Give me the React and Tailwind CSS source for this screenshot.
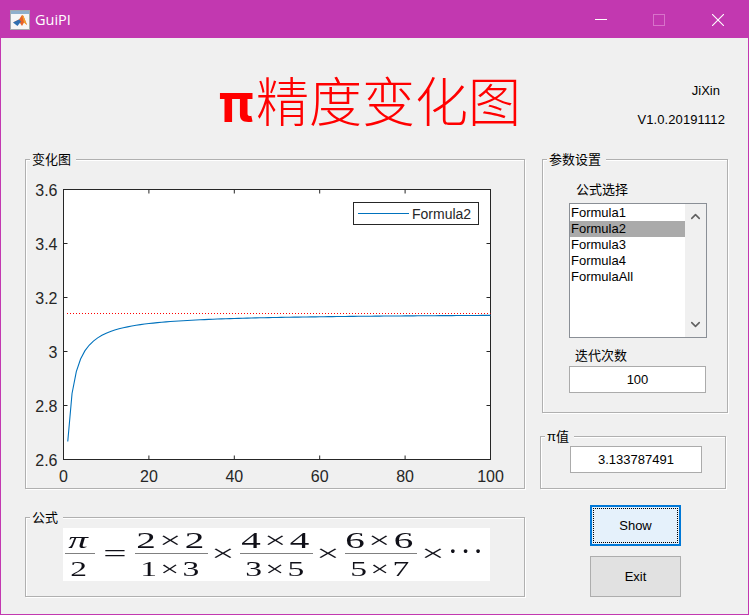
import { ChevronUp, ChevronDown } from 'lucide-react'

const cjk = "font-['Liberation_Sans','Noto_Sans_CJK_SC',sans-serif]"

// Wallis product, 2 * prod (2k)^2 / ((2k-1)(2k+1))
const wallis = []
let prod = 2
for (let k = 1; k <= 100; k++) {
  prod *= (4 * k * k) / ((2 * k - 1) * (2 * k + 1))
  wallis.push(prod)
}

// svg origin sits at page (26, 160)
const toX = v => 37.5 + v * 4.27
const toY = v => 29.5 + (3.6 - v) * 270
const curve = wallis.map((v, i) => `${toX(i + 1).toFixed(2)},${toY(v).toFixed(2)}`).join(' ')

const xTicks = [0, 20, 40, 60, 80, 100]
const yTicks = [2.6, 2.8, 3, 3.2, 3.4, 3.6]
const formulas = ['Formula1', 'Formula2', 'Formula3', 'Formula4', 'FormulaAll']

function Panel({ title, className, children }) {
  return (
    <div className={`relative border border-[#b0b0b0] shadow-[inset_1px_1px_0_#fff,1px_1px_0_#fff] ${className}`}>
      <span className="absolute -top-[8px] left-[4px] bg-[#f0f0f0] px-[2px] pr-[5px] text-[13px] leading-[15px] text-black">
        {title}
      </span>
      {children}
    </div>
  )
}

function Chart() {
  const left = toX(0)
  const right = toX(100)
  const top = toY(3.6)
  const bottom = toY(2.6)
  return (
    <svg className="block h-[328px] w-[498px]" viewBox="0 0 498 328">
      <rect x={left} y={top} width={right - left} height={bottom - top} fill="#fff" stroke="#262626" />
      {xTicks.map(t => (
        <g key={t}>
          <path d={`M${toX(t)} ${top}v4M${toX(t)} ${bottom}v-4`} stroke="#262626" />
          <text x={toX(t)} y={bottom + 22} textAnchor="middle" fontSize="16" fill="#262626" fontFamily="Liberation Sans">{t}</text>
        </g>
      ))}
      {yTicks.map(t => (
        <g key={t}>
          <path d={`M${left} ${toY(t)}h4M${right} ${toY(t)}h-4`} stroke="#262626" />
          <text x={left - 6} y={toY(t) + 6} textAnchor="end" fontSize="16" fill="#262626" fontFamily="Liberation Sans">{t}</text>
        </g>
      ))}
      <line x1="41" x2={right} y1="153.5" y2="153.5" stroke="#ff0000" strokeDasharray="1 2" />
      <polyline points={curve} fill="none" stroke="#0072bd" strokeWidth="1.1" />
      <rect x="327.5" y="42.5" width="125" height="22" fill="#fff" stroke="#262626" />
      <line x1="332" x2="383" y1="53.5" y2="53.5" stroke="#0072bd" />
      <text x="386" y="58.5" fontSize="14" fill="#262626" fontFamily="Liberation Sans">Formula2</text>
    </svg>
  )
}

function Frac({ top, bottom, width, italic }) {
  return (
    <div className={`flex flex-col items-center ${width}`}>
      <span className={`inline-block h-[24px] origin-center scale-x-[1.7] whitespace-pre text-[23px] leading-[24px] tracking-[2px] ${italic ? 'italic' : ''}`}>{top}</span>
      <div className="h-[1px] w-full bg-[#808080]" />
      <span className="mt-[3px] inline-block h-[24px] origin-center scale-x-[1.6] whitespace-pre text-[21px] leading-[24px] tracking-[2px]">{bottom}</span>
    </div>
  )
}

function Times({ width }) {
  return <span className={`inline-block scale-x-[1.8] text-center text-[23px] leading-[24px] ${width}`}>×</span>
}

function Formula() {
  return (
    <div className="ml-[37px] mt-[10px] flex h-[53px] w-[427px] items-start bg-white pl-[2px] pt-[1px] font-['Liberation_Serif',serif] text-[#101018] blur-[0.25px]">
      <Frac top="π" bottom="2" width="w-[30px]" italic />
      <span className="ml-[9px] mt-[13px] w-[22px] scale-x-[1.8] text-center text-[23px] leading-[24px]">=</span>
      <div className="ml-[9px]"><Frac top="2×2" bottom="1×3" width="w-[73px]" /></div>
      <div className="ml-[5px] mt-[13px]"><Times width="w-[20px]" /></div>
      <div className="ml-[7px]"><Frac top="4×4" bottom="3×5" width="w-[73px]" /></div>
      <div className="ml-[6px] mt-[13px]"><Times width="w-[18px]" /></div>
      <div className="ml-[8px]"><Frac top="6×6" bottom="5×7" width="w-[72px]" /></div>
      <div className="ml-[7px] mt-[13px]"><Times width="w-[18px]" /></div>
      <span className="ml-[7px] mt-[11px] text-[23px] font-bold leading-[24px] tracking-[5px]">···</span>
    </div>
  )
}

function MatlabIcon() {
  return (
    <svg className="h-[20px] w-[20px]" viewBox="0 0 20 20">
      <rect x="0.5" y="0.5" width="19" height="19" fill="#f6f6f6" stroke="#a4a8ac" />
      <rect x="1" y="1" width="18" height="3" fill="#8fb0cc" />
      <path d="M3 12.5l4-2 2-1 3-4.500 1.500 1 3.500 9-3-2.500-2 3.500-3-4.500z" fill="#e8622a" />
      <path d="M3 12.5l4-2 2-1 2 2-3.500 4.500z" fill="#2f6fb0" />
      <path d="M12 5l1.500 1 3.500 9-3-2.500z" fill="#f0a030" />
    </svg>
  )
}

export default function App() {
  return (
    <div className={`flex h-[615px] w-[749px] flex-col overflow-hidden border border-[#c238b0] bg-[#f0f0f0] ${cjk}`}>
      {/* title bar */}
      <div className="flex h-[37px] flex-none items-center bg-[#c238b0] pl-[9px] text-white">
        <MatlabIcon />
        <span className="ml-[5px] font-['Open_Sans',sans-serif] text-[14.5px]">GuiPI</span>
        <div className="ml-auto flex items-center">
          <div className="h-[1px] w-[12px] bg-white" />
          <div className="ml-[46px] h-[12px] w-[12px] border border-[#d873ca]" />
          <svg className="ml-[47px] mr-[24px] h-[12px] w-[12px]" viewBox="0 0 12 12">
            <path d="M0 0l12 12M12 0L0 12" stroke="#fff" strokeWidth="1.1" />
          </svg>
        </div>
      </div>

      {/* header */}
      <div className="flex h-[121px] flex-none items-start pl-[218px] pr-[23px]">
        <h1 className="mt-[36px] flex items-baseline text-[53px] font-light leading-[58px] text-[#ff0000]">
          <span className="w-[37px] font-['Inter',sans-serif] text-[54px] font-bold">π</span>精度变化图
        </h1>
        <div className="ml-auto mt-[45px] flex flex-col items-end text-[13px] leading-[15px] text-black">
          <span className="mr-[5px]">JiXin</span>
          <span className="mt-[14px] tracking-[0.1px]">V1.0.20191112</span>
        </div>
      </div>

      {/* main */}
      <div className="flex flex-1 pl-[24px]">
        <div className="flex w-[500px] flex-col">
          <Panel title="变化图" className="h-[330px] w-[500px]">
            <Chart />
          </Panel>
          <Panel title="公式" className="mt-[28px] h-[80px] w-[500px]">
            <Formula />
          </Panel>
        </div>

        <div className="ml-[15px] flex w-[188px] flex-col">
          <Panel title="参数设置" className="ml-[2px] h-[254px] w-[186px]">
            <div className="pl-[26px] pt-[22px]">
              <div className="pl-[7px] text-[13px] leading-[15px] text-black">公式选择</div>
              <div className="mt-[6px] flex h-[135px] w-[138px] border border-[#8a8f96] bg-white">
                <ul className="flex-1 pt-[1px] text-[13px] leading-[16px] text-black">
                  {formulas.map(f => (
                    <li key={f} className={`pl-[1px] ${f === 'Formula2' ? 'bg-[#aaaaaa]' : ''}`}>{f}</li>
                  ))}
                </ul>
                <div className="flex w-[21px] flex-col items-center justify-between bg-[#f0f0f0] py-[5px] text-[#606060]">
                  <ChevronUp className="h-[15px] w-[15px]" strokeWidth={2.5} />
                  <ChevronDown className="h-[15px] w-[15px]" strokeWidth={2.5} />
                </div>
              </div>
              <div className="mt-[10px] pl-[6px] text-[13px] leading-[15px] text-black">迭代次数</div>
              <div className="mt-[3px] h-[27px] w-[137px] border border-[#ababab] bg-white text-center text-[13px] leading-[25px] text-black">100</div>
            </div>
          </Panel>

          <Panel title="π值" className="mt-[23px] h-[53px] w-[186px]">
            <div className="ml-[29px] mt-[9px] h-[27px] w-[132px] border border-[#ababab] bg-white text-center text-[13px] leading-[25px] text-black">3.133787491</div>
          </Panel>

          <button className="ml-[50px] mt-[16px] h-[41px] w-[91px] border-2 border-[#0078d7] bg-[#e5f1fb] p-[1px] text-[13px] text-black">
            <span className="flex h-full w-full items-center justify-center border border-dotted border-black">Show</span>
          </button>
          <button className="ml-[50px] mt-[10px] h-[41px] w-[91px] border border-[#adadad] bg-[#e1e1e1] text-[13px] text-black">Exit</button>
        </div>
      </div>
    </div>
  )
}
